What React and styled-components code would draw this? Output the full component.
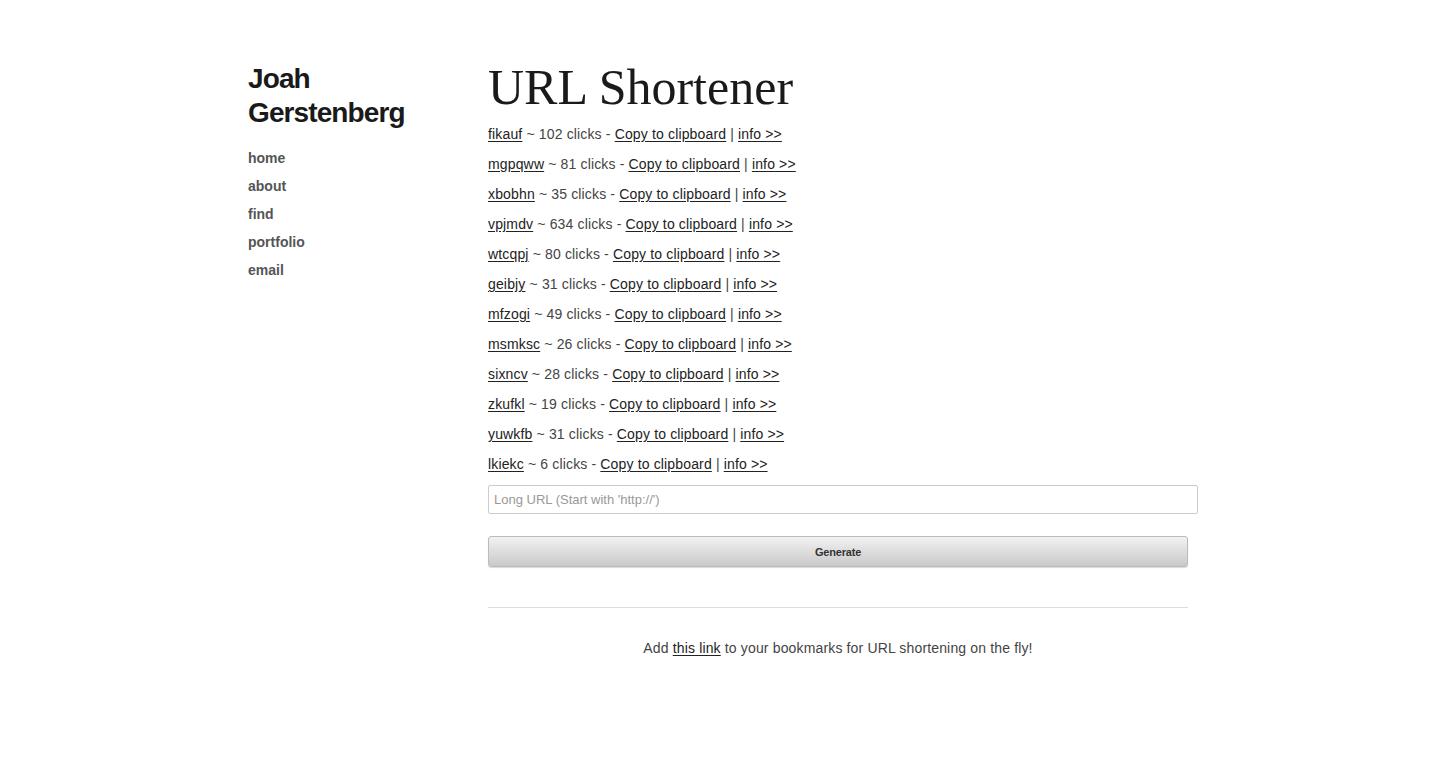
import React from 'react';
import styled, { createGlobalStyle } from 'styled-components';

const GlobalStyle = createGlobalStyle`
  body {
    margin: 0;
    background: #fff;
    font-family: "Liberation Sans", Arial, Helvetica, sans-serif;
    color: #444;
  }
`

const Page = styled.div`
  display: flex;
  padding: 62px 0 0 248px;
`

const Sidebar = styled.div`
  width: 240px;
  flex-shrink: 0;
`

const Name = styled.h1`
  margin: 0;
  font-size: 28px;
  line-height: 34px;
  font-weight: bold;
  letter-spacing: -0.9px;
  color: #1a1a1a;
`

const Nav = styled.nav`
  display: flex;
  flex-direction: column;
  margin-top: 14px;
`

const NavLink = styled.a`
  font-size: 14px;
  font-weight: bold;
  line-height: 28px;
  color: #555;
  text-decoration: none;
`

const Main = styled.div`
  width: 710px;
`

const Title = styled.h2`
  margin: 0 0 7px;
  font-family: "Liberation Serif", Georgia, serif;
  font-weight: normal;
  font-size: 50px;
  line-height: 50px;
  color: #1a1a1a;
`

const List = styled.div`
  display: flex;
  flex-direction: column;
`

const Row = styled.div`
  font-size: 14px;
  line-height: 30px;
  letter-spacing: 0.15px;
  color: #444;
`

const Link = styled.a`
  color: #222;
  text-decoration: underline;
  text-underline-offset: 2px;
`

const UrlInput = styled.input`
  display: block;
  box-sizing: border-box;
  width: 710px;
  height: 29px;
  margin-top: 6px;
  padding: 0 5px;
  border: 1px solid #ccc;
  border-radius: 2px;
  font-family: "Liberation Sans", Arial, sans-serif;
  font-size: 13px;
  outline: none;
  &::placeholder {
    color: #999;
  }
`

const Button = styled.button`
  display: block;
  box-sizing: border-box;
  width: 700px;
  height: 31px;
  margin-top: 22px;
  border: 1px solid #bbb;
  border-radius: 3px;
  background: linear-gradient(#f2f2f2, #c9c9c9);
  box-shadow: 0 1px 1px rgba(0, 0, 0, 0.15);
  font-family: "Liberation Sans", Arial, sans-serif;
  font-size: 11px;
  font-weight: bold;
  color: #333;
  letter-spacing: -0.2px;
`

const Rule = styled.hr`
  width: 700px;
  margin: 40px 0 0;
  border: none;
  border-top: 1px solid #ddd;
`

const Footer = styled.p`
  width: 700px;
  margin: 30px 0 0;
  text-align: center;
  font-size: 14px;
  line-height: 20px;
  letter-spacing: 0.15px;
  color: #444;
`

const links = [
  ['fikauf', 102],
  ['mgpqww', 81],
  ['xbobhn', 35],
  ['vpjmdv', 634],
  ['wtcqpj', 80],
  ['geibjy', 31],
  ['mfzogi', 49],
  ['msmksc', 26],
  ['sixncv', 28],
  ['zkufkl', 19],
  ['yuwkfb', 31],
  ['lkiekc', 6],
]

export default function App() {
  return (
    <>
      <GlobalStyle />
      <Page>
        <Sidebar>
          <Name>Joah<br />Gerstenberg</Name>
          <Nav>
            <NavLink href="#">home</NavLink>
            <NavLink href="#">about</NavLink>
            <NavLink href="#">find</NavLink>
            <NavLink href="#">portfolio</NavLink>
            <NavLink href="#">email</NavLink>
          </Nav>
        </Sidebar>
        <Main>
          <Title>URL Shortener</Title>
          <List>
            {links.map(([code, clicks]) => (
              <Row key={code}>
                <Link href="#">{code}</Link> ~ {clicks} clicks - <Link href="#">Copy to clipboard</Link> | <Link href="#">info &gt;&gt;</Link>
              </Row>
            ))}
          </List>
          <UrlInput placeholder="Long URL (Start with 'http://')" />
          <Button>Generate</Button>
          <Rule />
          <Footer>
            Add <Link href="#">this link</Link> to your bookmarks for URL shortening on the fly!
          </Footer>
        </Main>
      </Page>
    </>
  );
}
